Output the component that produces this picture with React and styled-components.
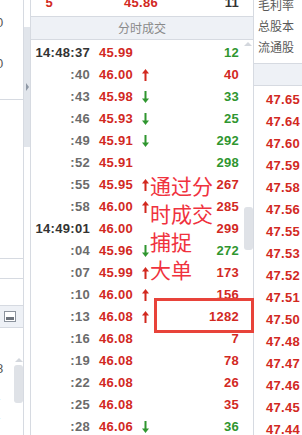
import React from 'react';
import styled, { createGlobalStyle } from 'styled-components';

const RED = '#d2291f';
const GREEN = '#2f962f';
const LINE = '#d6dae1';
const BAND = '#eef1f6';

const GlobalStyle = createGlobalStyle`
  html, body {
    margin: 0;
    padding: 0;
    background: #fff;
  }
  body {
    font-family: 'Liberation Sans', Arial, 'Noto Sans CJK SC', sans-serif;
  }
`;

const Page = styled.div`
  position: relative;
  display: flex;
  width: 302px;
  height: 435px;
  overflow: hidden;
  background: #fff;
`;

// ---- left strip (cut off list) ----
const LeftPanel = styled.div`
  flex: none;
  width: 23px;
  border-right: 1px solid ${LINE};
  display: flex;
  flex-direction: column;
  overflow: hidden;
  font-size: 13px;
  color: #555;
`;

const LeftSection = styled.div`
  flex: none;
  height: ${(p) => p.h}px;
  border-bottom: ${(p) => (p.line ? `1px solid ${LINE}` : 'none')};
  background: ${(p) => (p.shade ? BAND : 'transparent')};
  display: flex;
  flex-direction: ${(p) => (p.row ? 'row' : 'column')};
  padding-top: ${(p) => p.pt || 0}px;
  box-sizing: border-box;
`;

const CutCell = styled.div`
  height: ${(p) => p.h || 22}px;
  line-height: ${(p) => p.h || 22}px;
  margin-top: ${(p) => p.mt || 0}px;
  text-indent: -4px;
  white-space: nowrap;
`;

const FoldIcon = styled.div`
  width: 10px;
  height: 9px;
  margin: 5px 0 0 4px;
  border: 1px solid #8c939d;
  background: #fff;
  display: flex;
  align-items: center;
  justify-content: center;

  &::after {
    content: '';
    width: 8px;
    height: 3px;
    margin-top: 3px;
    background: #6d737c;
  }
`;

const MiniScroll = styled.div`
  width: 9px;
  margin-left: auto;
  display: flex;
  flex-direction: column;
  align-items: center;
  padding-top: 30px;
`;

const UpArrow = styled.div`
  width: 0;
  height: 0;
  border-left: 4px solid transparent;
  border-right: 4px solid transparent;
  border-bottom: 4px solid #d3d7dd;
`;

const Thumb = styled.div`
  width: 9px;
  height: ${(p) => p.h}px;
  margin-top: ${(p) => p.mt}px;
  border-radius: 3px;
  background: #dfe2e7;
`;

// ---- splitter ----
const Splitter = styled.div`
  flex: none;
  width: 6px;
  display: flex;
  flex-direction: column;
`;

const SplitGrip = styled.div`
  margin-top: 27px;
  height: 120px;
  background: #e1e5eb;
  display: flex;
  align-items: center;
  justify-content: center;

  &::after {
    content: '';
    border-top: 4px solid transparent;
    border-bottom: 4px solid transparent;
    border-left: 3px solid #8f98a5;
    margin-left: 1px;
  }
`;

// ---- tick table ----
const MainPanel = styled.div`
  flex: none;
  width: 222px;
  border-left: 1px solid ${LINE};
  border-right: 1px solid ${LINE};
  display: flex;
  flex-direction: column;
`;

const TopRow = styled.div`
  flex: none;
  height: 16px;
  border-bottom: 1px solid ${LINE};
  display: grid;
  grid-template-columns: 22px 105px 81px;
  overflow: hidden;
  font-size: 13px;
  font-weight: bold;
  letter-spacing: 0.3px;
`;

const TopCell = styled.div`
  margin-top: -4px;
  line-height: 13px;
  text-align: right;
  color: ${(p) => p.color};
`;

const Header = styled.div`
  flex: none;
  height: 22px;
  line-height: 22px;
  background: ${BAND};
  border-bottom: 1px solid ${LINE};
  text-align: center;
  font-family: 'Noto Sans CJK SC', sans-serif;
  font-size: 12px;
  color: #8a8a8a;
`;

const Body = styled.div`
  flex: 1;
  display: flex;
  overflow: hidden;
`;

const Table = styled.div`
  flex: 1;
  padding-top: 2px;
  padding-right: 4px;
`;

const TickRow = styled.div`
  display: grid;
  grid-template-columns: 59px 9px 43px 8px 1fr;
  height: 22px;
  line-height: 22px;
  font-size: 13px;
  font-weight: bold;
  letter-spacing: 0.3px;
  white-space: nowrap;
`;

const Time = styled.div`
  text-align: right;
  color: ${(p) => (p.full ? '#333' : '#6b6b6b')};
`;

const Price = styled.div`
  grid-column: 3;
  color: ${RED};
`;

const Dir = styled.div`
  display: flex;
  align-items: center;
`;

const Volume = styled.div`
  text-align: right;
  color: ${(p) => (p.down ? GREEN : RED)};
`;

const Track = styled.div`
  flex: none;
  width: 10px;
  display: flex;
  flex-direction: column;
  align-items: center;
  padding-top: 2px;
`;

// ---- right quote column ----
const RightPanel = styled.div`
  flex: 1;
  display: flex;
  flex-direction: column;
  overflow: hidden;
`;

const RightHead = styled.div`
  flex: none;
  height: 63px;
  border-bottom: 1px solid ${LINE};
  overflow: hidden;
  padding-left: 4px;
`;

const Label = styled.div`
  height: 21px;
  line-height: 21px;
  margin-top: ${(p) => p.mt || 0}px;
  font-family: 'Noto Sans CJK SC', sans-serif;
  font-size: 12px;
  color: #5a5a5a;
  white-space: nowrap;
`;

const RightBand = styled.div`
  flex: none;
  height: 21px;
  background: ${BAND};
  border-bottom: 1px solid ${LINE};
`;

const QuoteList = styled.div`
  padding-top: 3px;
  padding-left: 12px;
`;

const Quote = styled.div`
  height: 22px;
  line-height: 22px;
  font-size: 13px;
  font-weight: bold;
  letter-spacing: 0.3px;
  color: ${RED};
  white-space: nowrap;
`;

// ---- overlays ----
const Note = styled.div`
  position: absolute;
  left: 150px;
  top: 171px;
  font-family: 'Noto Sans CJK SC', sans-serif;
  font-size: 21px;
  line-height: 28px;
  color: #f0323e;
  text-shadow: 0 0 1px #fff, 0 0 2px #fff;
  white-space: pre;
`;

const Highlight = styled.div`
  position: absolute;
  left: 154px;
  top: 298px;
  width: 100px;
  height: 35px;
  box-sizing: border-box;
  border: 3px solid #e8433a;
`;

const Arrow = ({ down }) => (
  <svg width="7" height="12" viewBox="0 0 7 12">
    <g fill={down ? GREEN : RED} transform={down ? 'rotate(180 3.5 6)' : undefined}>
      <polygon points="3.5,0 7,4.5 0,4.5" />
      <rect x="2.5" y="4" width="2" height="8" />
    </g>
  </svg>
);

const ticks = [
  ['14:48:37', '45.99', null, '12', true],
  [':40', '46.00', 'up', '40', false],
  [':43', '45.98', 'down', '33', true],
  [':46', '45.93', 'down', '25', true],
  [':49', '45.91', 'down', '292', true],
  [':52', '45.91', null, '298', true],
  [':55', '45.95', 'up', '267', false],
  [':58', '46.00', 'up', '285', false],
  ['14:49:01', '46.00', null, '299', false],
  [':04', '45.96', 'down', '272', true],
  [':07', '45.99', 'up', '173', false],
  [':10', '46.00', 'up', '156', false],
  [':13', '46.08', 'up', '1282', false],
  [':16', '46.08', null, '7', false],
  [':19', '46.08', null, '78', false],
  [':22', '46.08', null, '26', false],
  [':25', '46.08', null, '35', false],
  [':28', '46.06', 'down', '36', true],
];

const quotes = [
  '47.65', '47.64', '47.60', '47.59', '47.58', '47.56', '47.55', '47.53',
  '47.52', '47.51', '47.50', '47.48', '47.47', '47.46', '47.45', '47.44', '47.43',
];

const App = () => (
  <Page>
    <GlobalStyle />
    <LeftPanel>
      <LeftSection h={100} line pt={12}>
        <CutCell>0</CutCell>
        <CutCell mt={19}>0</CutCell>
      </LeftSection>
      <LeftSection h={159} line />
      <LeftSection h={20} line />
      <LeftSection h={27} line />
      <LeftSection h={22} line shade>
        <FoldIcon />
      </LeftSection>
      <LeftSection h={120} row>
        <div>
          <CutCell mt={30}>8</CutCell>
          <CutCell mt={8}>-</CutCell>
          <CutCell mt={-3}>-</CutCell>
        </div>
        <MiniScroll>
          <UpArrow />
          <Thumb h={38} mt={3} />
        </MiniScroll>
      </LeftSection>
    </LeftPanel>

    <Splitter>
      <SplitGrip />
    </Splitter>

    <MainPanel>
      <TopRow>
        <TopCell color={RED}>5</TopCell>
        <TopCell color={RED}>45.86</TopCell>
        <TopCell color="#333">11</TopCell>
      </TopRow>
      <Header>分时成交</Header>
      <Body>
        <Table>
          {ticks.map(([time, price, dir, vol, down], i) => (
            <TickRow key={i}>
              <Time full={time.length > 3}>{time}</Time>
              <Price>{price}</Price>
              <Dir>{dir && <Arrow down={dir === 'down'} />}</Dir>
              <Volume down={down}>{vol}</Volume>
            </TickRow>
          ))}
        </Table>
        <Track>
          <UpArrow />
          <Thumb h={43} mt={161} />
        </Track>
      </Body>
    </MainPanel>

    <RightPanel>
      <RightHead>
        <Label mt={-6}>毛利率</Label>
        <Label>总股本</Label>
        <Label>流通股</Label>
      </RightHead>
      <RightBand />
      <QuoteList>
        {quotes.map((q) => (
          <Quote key={q}>{q}</Quote>
        ))}
      </QuoteList>
    </RightPanel>

    <Note>{'通过分\n时成交\n捕捉\n大单'}</Note>
    <Highlight />
  </Page>
);

export default App;
